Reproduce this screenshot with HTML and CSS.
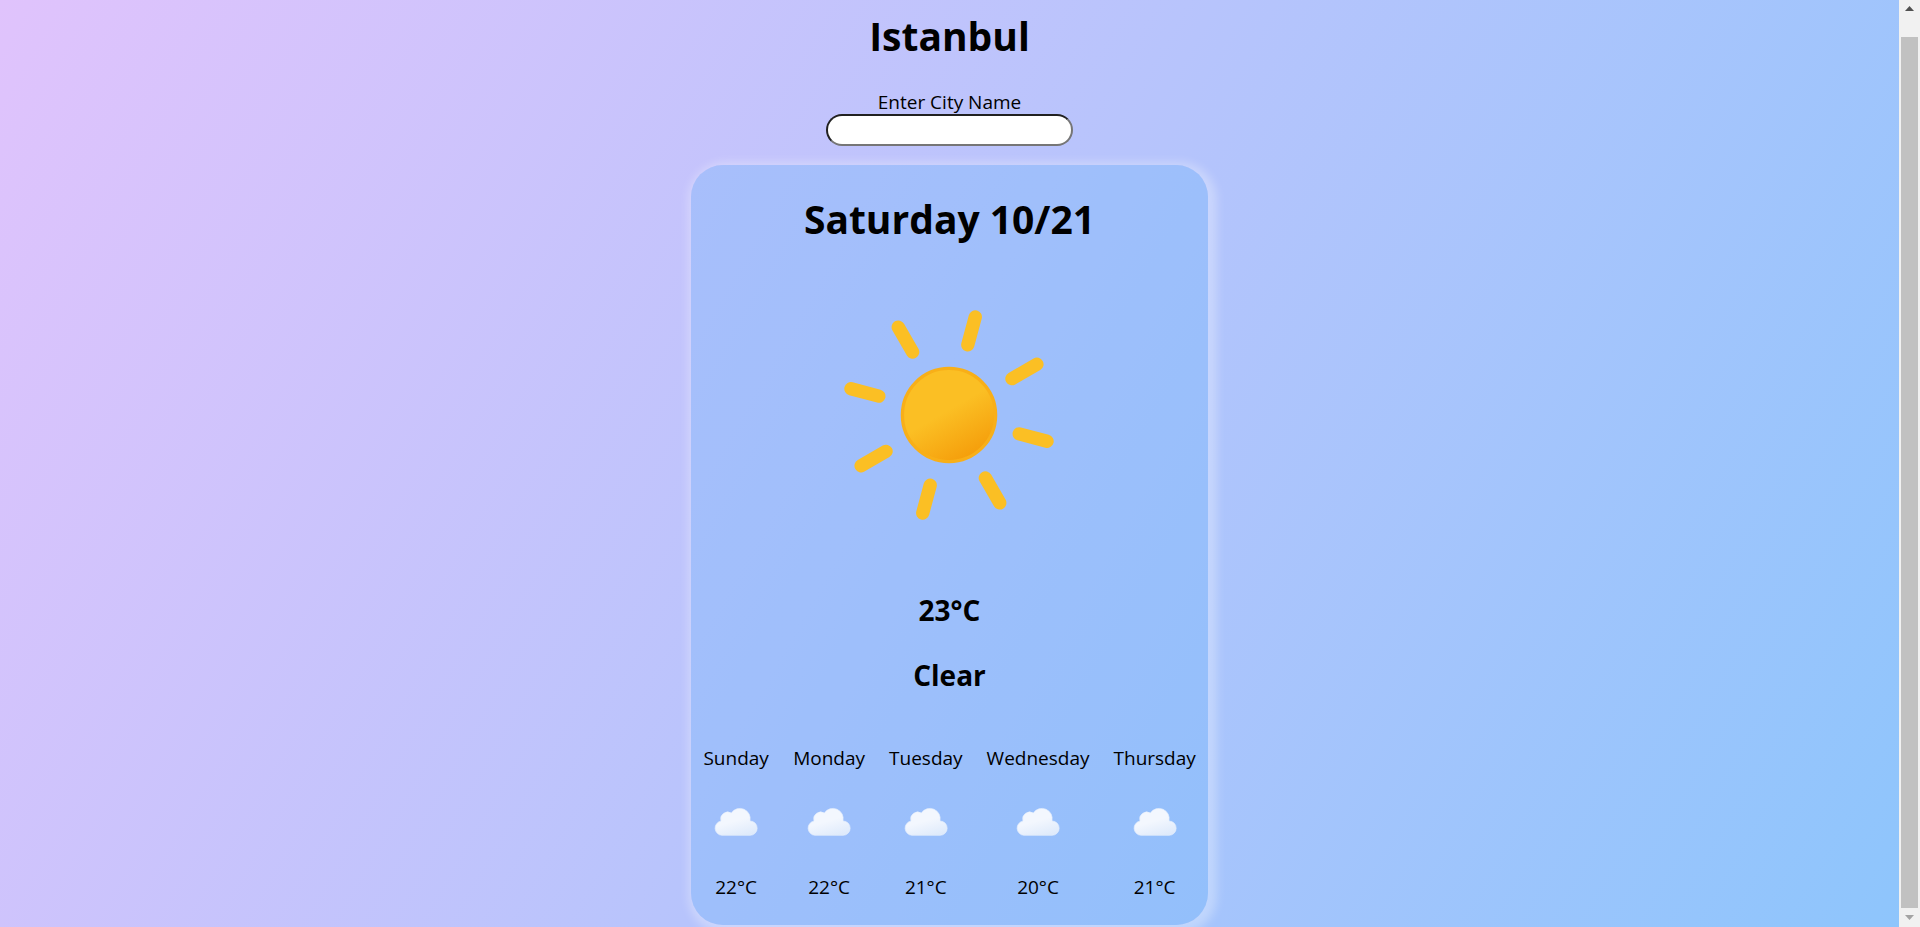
FILE: index.html
```html
<!DOCTYPE html>
<html lang="en">
<head>
<meta charset="utf-8">
<title>Weather</title>
<link rel="stylesheet" href="styles.css">
</head>
<body>
<svg class="defs" aria-hidden="true">
  <defs>
    <linearGradient id="cloud-fill" x1="0.3" y1="0" x2="0.75" y2="1">
      <stop offset="0" stop-color="#f3f7fe"/>
      <stop offset="0.45" stop-color="#f3f7fe"/>
      <stop offset="1" stop-color="#deeafb"/>
    </linearGradient>
    <symbol id="cloud" viewBox="0 0 198 198">
      <path d="M57 139H141A21.5 21.5 0 0 0 141 96A31 31 0 0 0 85 72A21 21 0 0 0 54 96A21.7 21.7 0 0 0 57 139Z" fill="url(#cloud-fill)" stroke="#e6effc" stroke-width="2"/>
    </symbol>
  </defs>
</svg>
<main class="page">
  <h1 class="city">Istanbul</h1>
  <form class="search">
    <label class="search-label" for="city">Enter City Name</label>
    <input class="search-input" id="city" type="text">
  </form>
  <section class="card">
    <h1 class="date">Saturday 10/21</h1>
    <svg class="sun" viewBox="0 0 512 512" role="img" aria-label="Clear">
      <defs>
        <linearGradient id="sun-fill" gradientUnits="userSpaceOnUse" x1="214" y1="183" x2="298" y2="329">
          <stop offset="0" stop-color="#fbbf24"/>
          <stop offset="0.45" stop-color="#fbbf24"/>
          <stop offset="1" stop-color="#f59e0b"/>
        </linearGradient>
      </defs>
      <circle cx="256" cy="256" r="84" fill="url(#sun-fill)" stroke="#f8af18" stroke-width="6"/>
      <g stroke="#fbbf24" stroke-width="24" stroke-linecap="round" transform="rotate(15 256 256)">
        <path d="M256 125V73M256 387V439M125 256H73M387 256H439"/>
        <path d="M256 125V73M256 387V439M125 256H73M387 256H439" transform="rotate(45 256 256)"/>
      </g>
    </svg>
    <h2 class="now">23°C</h2>
    <h2 class="now">Clear</h2>
    <div class="forecast">
      <div class="day"><p>Sunday</p><svg class="cloud"><use href="#cloud"/></svg><p>22°C</p></div>
      <div class="day"><p>Monday</p><svg class="cloud"><use href="#cloud"/></svg><p>22°C</p></div>
      <div class="day"><p>Tuesday</p><svg class="cloud"><use href="#cloud"/></svg><p>21°C</p></div>
      <div class="day"><p>Wednesday</p><svg class="cloud"><use href="#cloud"/></svg><p>20°C</p></div>
      <div class="day"><p>Thursday</p><svg class="cloud"><use href="#cloud"/></svg><p>21°C</p></div>
    </div>
  </section>
</main>
<div class="scrollbar" aria-hidden="true">
  <svg class="arrow" viewBox="0 0 9 5"><path d="M0 5L4.500 0L9 5Z" fill="#505050"/></svg>
  <div class="thumb"></div>
  <svg class="arrow" viewBox="0 0 9 5"><path d="M0 0L4.500 5L9 0Z" fill="#a3a3a3"/></svg>
</div>
</body>
</html>
```
FILE: styles.css
```css
* { box-sizing: border-box; }

body {
  margin: 0;
  min-height: 100vh;
  display: flex;
  font-family: "Segoe UI", "Open Sans", "Noto Sans", sans-serif;
  font-size: 19px;
  line-height: 27px;
  color: #000;
}

.defs { position: absolute; width: 0; height: 0; }

.page {
  flex: 1;
  display: flex;
  flex-direction: column;
  align-items: center;
  padding: 9px 0 2px;
  overflow: hidden;
  background: linear-gradient(120deg, #e0c3fc 0%, #8ec5fc 100%);
}

.city, .date {
  margin: 0;
  font-size: 39px;
  line-height: 54px;
  font-weight: 700;
}

.search {
  display: flex;
  flex-direction: column;
  align-items: center;
  margin: 28px 0 19px;
}

.search-label { line-height: 23px; }

.search-input {
  width: 247px;
  height: 32px;
  padding: 0 12px;
  border: 2px inset #767676;
  border-radius: 16px;
  background: #fff;
  font: inherit;
}

.card {
  display: flex;
  flex-direction: column;
  align-items: center;
  padding: 27px 0 4px;
  border-radius: 32px;
  background: rgba(110, 182, 248, 0.34);
  box-shadow: 3px 3px 10px 6px rgba(255, 255, 255, 0.3);
}

.sun { width: 284px; height: 284px; margin: 27px 0 8px; }

.now {
  margin: 25px 0 0;
  font-size: 28px;
  line-height: 40px;
  font-weight: 700;
}

.forecast {
  display: flex;
  gap: 24px;
  margin-top: 30px;
  padding: 0 12px;
}

.day { display: flex; flex-direction: column; align-items: center; }
.day p { margin: 20px 0; }
.cloud { width: 66px; height: 66px; margin: -3px 0 -1px; }

.scrollbar {
  display: flex;
  flex-direction: column;
  align-items: center;
  gap: 26px;
  width: 21px;
  padding: 6px 0 7px;
  background: #f1f1f1;
}

.arrow { width: 9px; height: 5px; }
.thumb { flex: 1; width: 17px; margin-bottom: -19px; background: #c1c1c1; }
```
